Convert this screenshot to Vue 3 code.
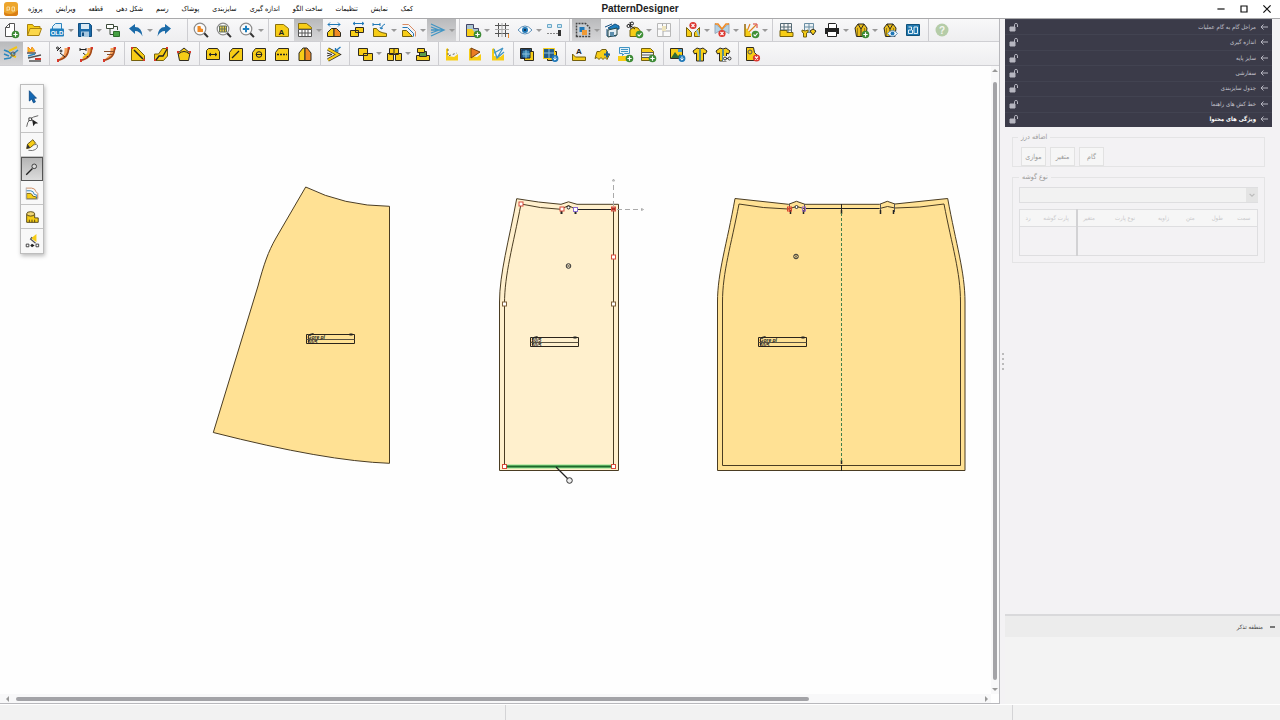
<script setup>
const INK = '#2e2a20'
const YEL = '#f7cd16'
const BLUE = '#1a6aa8'
const ORG = '#f08a24'

const plus = '<circle cx="13.5" cy="13.5" r="3.8" fill="#3c8a35"/><path d="M13.5 11.3v4.4M11.3 13.5h4.4" stroke="#fff" stroke-width="1.2"/>'
const tick = '<circle cx="13.5" cy="13.5" r="3.8" fill="#3f9038"/><path d="M11.6 13.5l1.5 1.5 2.4-2.8" stroke="#fff" stroke-width="1.1"/>'
const cross = (x, y) => `<circle cx="${x}" cy="${y}" r="3.6" fill="#dc3730"/><path d="M${x - 1.5} ${y - 1.5}l3 3m0-3l-3 3" stroke="#fff" stroke-width="1.1"/>`
const blob = '<circle cx="14" cy="13.5" r="3.4" fill="#1f78b8"/><path d="M14 11.5v3.6m-1.6-1.6l1.6 1.6 1.6-1.6" stroke="#fff"/>'
const lens = (inner) => `<circle cx="8" cy="8" r="5.8" fill="#fbfbfb" stroke="#8b8b8b" stroke-width="1.2"/>${inner}<path d="M12.3 12.3l3.6 3.8" stroke="#333" stroke-width="2"/>`
const tag = (inner) => `<path d="M2.5 15.5V7.5l3-4h10v12z" fill="${YEL}" stroke="${INK}"/>${inner}`
const sheet = (inner) => `<path d="M2.5 14.5v-9l2-2h9l2 3v8z" fill="${YEL}" stroke="${INK}"/>${inner}`
const shirt = (inner) => `<path d="M6 3L2 6l1.6 3L5.5 8v8h7V8l1.9 1L16 6l-4-3q-3 2-6 0z" fill="${YEL}" stroke="${INK}"/><path d="M9 4.5V16" stroke="#1f78b8" stroke-width="1.5"/>${inner}`
const coat = (inner) => `<path d="M4.5 15.5L3 7l3-4h6l3 4-1 8.5z" fill="#e8bc1c" stroke="${INK}"/><path d="M6 3l3 5 3-5M9 8v8" stroke="${INK}"/><path d="M5.5 7v8M12.5 7v8" stroke="#9a7c12"/>${inner}`
const arc = (inner) => `<path d="M14.5 3Q15 13 3.5 15.5L8.5 11Q11 8 10.5 3z" fill="#f6a25c"/><path d="M14.5 3Q15 13 3.5 15.5" stroke="#a44a18" stroke-width="1.5"/><path d="M13 2h3v3zM3 14h2v3H3z" fill="#d9372c"/>${inner}`
const eye = (y) => `<path d="M2 ${y}q7-8 14 0q-7 8-14 0z" fill="#fff" stroke="#5c8fb8"/><circle cx="9" cy="${y}" r="3" fill="#1f78b8"/><circle cx="9" cy="${y}" r="1" fill="#123"/>`

const icons = {
  new: `<path d="M3.5 15.5V6.5l4-4h5v13z" fill="#fff" stroke="#555"/><path d="M3.5 6.5h4v-4" stroke="#555"/>${plus}`,
  open: `<path d="M2.5 14.5v-11h5l1.500 2h6v2" fill="${YEL}" stroke="#a9820e"/><path d="M2.5 14.5l2.500-7h11.500l-2.500 7z" fill="#fbd74a" stroke="#a9820e"/>`,
  old: '<path d="M4.5 8V5.5l3-3h6V8" fill="#dff0fa" stroke="#2c83bd"/><rect x="2" y="7.5" width="14" height="8" rx="1" fill="#1d7fbf"/><text x="9" y="13.8" font-size="6" font-weight="700" font-family="Liberation Sans, sans-serif" text-anchor="middle" fill="#fff">OLD</text>',
  save: `<path d="M2.5 2.5h11l2 2v11h-13z" fill="${BLUE}" stroke="#124f80"/><path d="M5 3h8v5H5z" fill="#dbe9f3"/><path d="M5 10.5h8V16H5z" fill="#a8c8e0"/><path d="M6 11.5h2V15H6z" fill="#124f80"/>`,
  tree: '<path d="M2.5 3.5h7v4h-7z" fill="#fff" stroke="#3c4b3a"/><path d="M6 7.5v6h4M9.5 5.5h4V9" stroke="#3c4b3a"/><path d="M9.5 10.5h6v5h-6z" fill="#46a043" stroke="#2c6d2b"/>',
  undo: `<path d="M2 7.5L8 3v3q7 0 7.500 9.500Q13 10 8 10v3z" fill="${BLUE}"/>`,
  redo: `<path d="M16 7.5L10 3v3q-7 0-7.500 9.500Q5 10 10 10v3z" fill="${BLUE}"/>`,
  find: lens(`<path d="M5.5 11V5h3l.5 2.500 2 .5V11z" fill="${ORG}"/>`),
  findGrid: lens('<path d="M4.5 5h7v6h-7z" fill="#e8cb4a"/><path d="M4.5 5h7v6h-7zM4.5 8h7M7 5v6M9.5 5v6" stroke="#65705a"/>'),
  zoom: lens('<path d="M8 4.8v6.400M4.8 8h6.400" stroke="#1d7fbf" stroke-width="2"/>'),
  tagA: `<path d="M2.5 15.5v-12h8l5 4v8z" fill="${YEL}" stroke="#88700f"/><text x="8.5" y="13.5" font-size="8" font-weight="700" font-family="Liberation Sans, sans-serif" text-anchor="middle" fill="#222">A</text>`,
  tagTable: `<path d="M2.5 8V2.5h8l5 4V8z" fill="${YEL}" stroke="#88700f"/><path d="M2.5 8.5h13v7h-13z" fill="#fff"/><path d="M2.5 8.5h13v7h-13zM2.5 12h13M6 8.5v7M9 8.5v7M12 8.5v7" stroke="#555"/>`,
  flip: `<path d="M3 3.5h12M5 1.5l-2 2 2 2M13 1.5l2 2-2 2" stroke="#1f78b8"/><path d="M2.5 15.5v-4l4-4h2.500v8z" fill="${YEL}" stroke="${INK}"/><path d="M9 15.5v-8h2.500l4 4v4z" fill="${ORG}" stroke="${INK}"/>`,
  stackMove: `<path d="M5 2.5h11M7 1L5 2.5 7 4M14 1l2 1.500L14 4" stroke="#1f78b8"/><path d="M7.5 6.5h8v5h-8zM2.5 9.5h8v6h-8z" fill="${YEL}" stroke="${INK}"/>`,
  step: `<path d="M2.5 15.5V7.5h3q2 4 10 5v3z" fill="${YEL}" stroke="#74600e"/><path d="M2 3.5h7M2 2v3M9 2v3M14 3q-3 1-4 5M9 6l1 2 2-1" stroke="#1f78b8"/>`,
  contour: `<path d="M2.5 15.5v-6h4l6 6z" fill="${YEL}" stroke="#74600e"/><path d="M2.5 6.5h5l6 6v3" stroke="#1f78b8"/><path d="M2.5 3.5h6l7 7v5" stroke="#d98b62"/>`,
  fan: '<path d="M2 3l13 6-13 6M2 6l8 3-8 3M2 9h12" stroke="#4295c4" stroke-width="1.3"/>',
  pieceAdd: `<path d="M2.5 15.5v-12h7v4h5v8z" fill="#a9c4cf" stroke="#446"/><path d="M3 8h5l3 4h3v3H3z" fill="${YEL}"/>${plus}`,
  grid: '<path d="M5.5 2v14M12.5 2v14M2 4.5h14M2 12.5h14" stroke="#555"/><path d="M9 2v14M2 8.5h14" stroke="#aaa"/><path d="M15.5 13v4" stroke="#ee8b2e"/>',
  eye: eye(9),
  slider: '<path d="M2.5 3.5h4v3h-4zM12.5 3.5h4v3h-4z" fill="#cfe6f3" stroke="#6aa8c8"/><path d="M2 12.5h11" stroke="#888" stroke-dasharray="2 1"/><path d="M13 9h3v6h-3z" fill="#333"/>',
  select: '<path d="M2.5 15.5v-13h9l4 4v9z" fill="#c9cdd1" stroke="#444" stroke-width="1.5" stroke-dasharray="2 1"/><path d="M5.5 6h5v5h-5z" fill="#1f78b8"/><path d="M8 9h5v5H8z" fill="#f09a35"/>',
  house: '<path d="M5 7l7-4 4 2v3l-7 1z" fill="#1d7fbf" stroke="#124f80"/><path d="M2 6l7-3M4 8v7h9V8" stroke="#124f80"/><path d="M5 9l9-2v7l-9 2z" fill="#e4eef4" stroke="#244"/><path d="M7 11h4v4H7z" fill="#5d8fae"/>',
  cutOk: `<path d="M4 15.5V9l4-3 4 1 3 4v4.500z" fill="${YEL}" stroke="#74600e"/><path d="M2 3l7 5M4 1l1 7" stroke="#222"/><circle cx="2.5" cy="5" r="1.5" stroke="#222"/><circle cx="6" cy="2.5" r="1.5" stroke="#222"/>${tick}`,
  mapPale: '<path d="M2.5 2.5h13v13h-13z" fill="#fafafa" stroke="#b8b8b8"/><path d="M2.5 8h5V2.5M8 15v-5h7M11.5 3v5" stroke="#aaa"/><path d="M7 5h4v5H7z" fill="#eee4bd"/>',
  dartX: `<path d="M2.5 15.5v-9l5 5v4zM15.5 15.5v-9l-5 5v4z" fill="${YEL}" stroke="#74600e"/><path d="M13 9l2 6" stroke="#8fc4e0" stroke-width="2"/>${cross(9, 4.5)}`,
  tieX: `<path d="M2 2.5l7 6-7 4zM16 2.5l-7 6 7 4z" fill="#b4d2e4" stroke="#9ab"/><path d="M2 3h3l4 5 4-5h3" stroke="${ORG}" stroke-width="1.5"/>${cross(9, 12.5)}`,
  rays: `<path d="M3 15V3M3 15L8 3M3 15L14 4" stroke="#dd8323" stroke-width="1.2"/><path d="M3 15.5V6l6 7v2.500z" fill="${YEL}"/><path d="M3 3v12.500h6" stroke="#74600e"/><path d="M11 3h4v4" stroke="#d9372c"/>${tick}`,
  tableTape: `<path d="M3.5 2.5h11v10h-11zM3.5 6h11M3.5 9h11M7 2.5v10M11 2.5v10" fill="#f5f5f5" stroke="#556a75"/><path d="M3 9.5h7v2h6v4H3z" fill="${YEL}" stroke="#74600e"/>`,
  dressGrid: `<path d="M4.5 2.5h9v9h-9zM4.5 6h9M9 2.5v9" fill="#e8f0f4" stroke="#6b8fa4"/><path d="M2 9l3 1 3-1v2l-1.500 1v4h-3v-4L2 11z" fill="${YEL}" stroke="#74600e"/><path d="M10 10l3-2 3 2-3 4z" fill="${YEL}" stroke="${INK}"/>`,
  print: '<path d="M5.5 7V2.5h7l1 1V7" fill="#fff" stroke="#222"/><path d="M2 7h14v6H2z" fill="#222"/><path d="M4.5 10.5h9v5h-9z" fill="#fff" stroke="#222"/>',
  coatAdd: coat(plus),
  coatEye: coat('<path d="M6.5 12.5q5-6 10 0q-5 6-10 0z" fill="#fff" stroke="#5c8fb8"/><circle cx="11.5" cy="12.5" r="2" fill="#1f78b8"/>'),
  screen: '<path d="M2.5 3.5h13v11h-13z" fill="#1f78b0" stroke="#115179"/><path d="M4.5 6h3v3h-3v3.500h4V9M10 12.5V6h3.500v6.500z" stroke="#e2f0f7"/>',
  help: '<circle cx="9" cy="9" r="6.5" fill="#b5cca8"/><text x="9" y="12.5" font-size="10" font-weight="700" font-family="Liberation Sans, sans-serif" text-anchor="middle" fill="#f3f6f0">?</text>',

  seam: '<path d="M2 5l5 2 3 3 6-5M2 14l6-1 3-3M2 9l5 2" stroke="#2b87bd" stroke-width="1.6"/><path d="M7 6l8-4M9 10l5 2" stroke="#f4c414" stroke-width="2"/><circle cx="11" cy="9" r="2" stroke="#555"/>',
  seamFlat: `<path d="M3 7V2l3 3 1-3 3 4z" fill="${YEL}" stroke="${ORG}"/><path d="M2 8h9M3 13l13-3M4 16h12" stroke="#555" stroke-width="1.3"/><path d="M3 11l7-2" stroke="#2b87bd" stroke-width="1.5"/><path d="M10 14h6" stroke="#d9372c" stroke-width="2"/>`,
  arcPct: arc('<path d="M3 6l4-4" stroke="#222"/><circle cx="3.5" cy="3" r="1" stroke="#222"/><circle cx="7" cy="6" r="1" stroke="#222"/><path d="M6 8l5 4" stroke="#222"/>'),
  arcLen: arc('<path d="M3 4.5h6M3 3v3M9 3v3" stroke="#222"/><path d="M6 8l5 4" stroke="#222"/><path d="M6 13l6-5" stroke="#f4c414" stroke-width="2"/>'),
  arcFlat: arc('<path d="M4 6.5h10M7 9.5h6" stroke="#8a4d2a"/>'),
  cornerCut: `<path d="M2.5 2.5h5l8 8v5h-13z" fill="${YEL}" stroke="#74600e"/><path d="M5 5l9 9" stroke="#222" stroke-width="1.5"/><path d="M2 2h2v2H2zM14 14h2v2h-2z" fill="#d9372c"/>`,
  curveCut: `<path d="M2.5 15.5V9h4l4-5.500h5V11l-4 4.500z" fill="${YEL}" stroke="#74600e"/><path d="M4 15l3-4h4l4-7" stroke="#222" stroke-width="1.3"/><path d="M2 14h2v2H2zM14 2h2v2h-2z" fill="#d9372c"/>`,
  pentagon: `<path d="M4.5 15.5L3 8l6-5 6 5-1.500 7.500z" fill="${YEL}" stroke="${INK}"/><path d="M3.5 9Q9 4 14.5 9" stroke="#222"/><path d="M2 6h2v2H2zM14 6h2v2h-2z" fill="#d9372c"/>`,
  tagArrow: sheet('<path d="M5 9.5h8M7 8L5 9.5 7 11M11 8l2 1.500-2 1.500" stroke="#222"/>'),
  tagSlash: tag('<path d="M5 13l7-7" stroke="#222" stroke-width="1.3"/>'),
  tagRound: tag('<circle cx="9" cy="9.5" r="2.8" stroke="#222"/><path d="M6 9.5h6" stroke="#222"/>'),
  tagDots: tag('<path d="M4 9.5h10" stroke="#222" stroke-width="1.5" stroke-dasharray="2 1"/>'),
  halves: `<path d="M3 15.5V8l4-5h2v12.500z" fill="${YEL}" stroke="${INK}"/><path d="M9 15.5V3h2l4 5v7.500z" fill="${ORG}" stroke="${INK}"/>`,
  chevrons: `<path d="M3 4l10 5.500L3 15" stroke="${INK}" stroke-width="3.6"/><path d="M3 4l10 5.500L3 15" stroke="${YEL}" stroke-width="2"/><path d="M2 8l5 1.500L2 11" stroke="${INK}"/><path d="M15.5 2l-5 4m0-3v3h3" stroke="#1f78b8" stroke-width="1.3"/>`,
  pair: `<path d="M2.5 3.5h9v7h-9zM7.5 8.5h9v7h-9z" fill="${YEL}" stroke="${INK}"/>`,
  trio: `<path d="M4.5 3.5h9v6h-9zM2.5 8.5h6v7h-6zM10.5 8.5h6v7h-6z" fill="${YEL}" stroke="${INK}"/><path d="M9 4v5" stroke="${INK}"/>`,
  stack: `<path d="M2.5 10.5h13v5h-13z" fill="${YEL}" stroke="${INK}"/><path d="M5.5 6.5h7v5h-7z" fill="#5a9c4b" stroke="${INK}"/><path d="M3.5 3.5h7v4h-7z" fill="${YEL}" stroke="${INK}"/>`,
  cornerA: `<path d="M3 15.5V4l2-1v8l6 1 4-3v6.500z" fill="${YEL}"/><path d="M5 4v7l9-3" stroke="#665" stroke-dasharray="2 2"/>`,
  cornerB: `<path d="M3 15.5V4l2-1v8l6 1 4-3v6.500z" fill="${YEL}"/><path d="M5 3v10l9-6z" fill="#eb7b24" stroke="#74400e"/>`,
  cornerC: `<path d="M3 15.5V4l2-1v8l6 1 4-3v6.500z" fill="${YEL}"/><path d="M5 4l3 9 6-10M5 8l9-5M8 13l7-6" stroke="#4295c4" stroke-width="1.3"/>`,
  photo: `<path d="M2.5 3.5h11v10h-11z" fill="#245d88" stroke="${INK}"/><path d="M6.5 6.5h9v9h-9z" fill="${YEL}" stroke="${INK}"/><path d="M4 5h8v8H4z" fill="#3a86b4" stroke="#124"/><path d="M4 9h8M8 5v8" stroke="#8cc0dc"/>`,
  photoDot: `<path d="M6.5 6.5h9v9h-9z" fill="${YEL}" stroke="${INK}"/><path d="M2.5 3.5h11v10h-11z" fill="#245d88" stroke="${YEL}"/><path d="M3 8h10M8 4v9" stroke="#8cc0dc"/>${blob}`,
  textPiece: `<path d="M2.5 15.5V9l3 3h10v3.500z" fill="${YEL}" stroke="#74600e"/><text x="9" y="8.5" font-size="8" font-weight="700" font-family="Liberation Sans, sans-serif" text-anchor="middle" fill="#222">A</text>`,
  zigzag: `<path d="M2 13.5l2-7q3 1 5-2h4l3 6-2 4-2-2-2 2-2-2-2 2-2-2z" fill="${YEL}" stroke="#74600e"/><path d="M14 6.5v6M11 9.5h6" stroke="#1f5f90" stroke-width="2"/>`,
  noteAdd: `<path d="M3.5 2.5h10v6h-5l-2 2v-2h-3z" fill="#e4f1f8" stroke="#4295c4"/><path d="M5 4.5h7M5 6.5h7" stroke="#4295c4"/><path d="M2 11h9v5H2z" fill="${YEL}"/>${plus}`,
  sheetAdd: `<path d="M2.5 15.5v-12h9l3 3v9z" fill="${YEL}" stroke="#74600e"/><path d="M3 7.5h11v5H3z" fill="#f4f4f0"/><path d="M2.5 7.5h12M2.5 10h12M2.5 12.5h9" stroke="#555"/>${plus}`,
  landscape: `<path d="M2.5 3.5h12v10h-12z" fill="${YEL}" stroke="${INK}"/><path d="M3 13l4-6 3 4 2-2 2 4z" fill="#2d6b3a"/><path d="M10 4h4v3h-4z" fill="#4f9cc4"/>${blob}`,
  shirt: shirt(''),
  shirtLink: shirt('<path d="M9 11h8v5H9z" fill="#f2f2f3"/><circle cx="11" cy="13.5" r="1.5" stroke="#333"/><circle cx="15.5" cy="13.5" r="1.5" stroke="#333"/><path d="M12 13.5h2" stroke="#333"/>'),
  pieceX: `<path d="M3.5 15.5v-13h7l1 5 3 3v5z" fill="${YEL}" stroke="${INK}"/><circle cx="7" cy="7" r="2" stroke="#555"/>${cross(13.5, 13)}`,

  cursor: '<path d="M6 2v11.500l2.800-2.300 1.800 4.300 2.200-1-1.900-4.200H14z" fill="#1368b4" stroke="#0d4a86"/>',
  node: '<path d="M3 15.5Q4 5 16 3" stroke="#555"/><path d="M5.5 5.5h3v3h-3z" fill="#fff" stroke="#333"/><path d="M9 7l1.500 8 2-3 3.500-.5z" fill="#222"/>',
  pencil: `<path d="M4 8l6-5 3 4-6 5-4 1z" fill="${YEL}" stroke="#5c4b10"/><path d="M3 13l1-5 3 4z" fill="#333"/><path d="M5 15q5 1 8-1t2-5q-1-2-3 0" stroke="#666"/>`,
  pin: '<path d="M2.5 15.5l7-7" stroke="#222" stroke-width="1.5"/><circle cx="11.5" cy="6" r="2.6" fill="#d8d8d8" stroke="#333"/>',
  layers: `<path d="M3 15.5v-6h4q2 0 3 3l4 1v2z" fill="${YEL}" stroke="#74600e"/><path d="M2.5 6.5h5q3 0 4 4l3 1v4" stroke="#1f78b8"/><path d="M2.5 3.5h6q4 0 5 4l2 2v6" stroke="#c98355"/><path d="M2.5 3v13h13" stroke="#aaa"/>`,
  tape: `<path d="M3 6v9h13v-5h-4V6z" fill="${YEL}" stroke="#4c3e10"/><ellipse cx="7.5" cy="5.5" rx="4.5" ry="2.5" fill="#f0d675" stroke="#4c3e10"/><path d="M6 15v-3M9 15v-3M12 15v-3" stroke="#4c3e10"/>`,
  symmetry: `<path d="M8 6l6-5v9z" fill="${YEL}"/><path d="M7 6.5l6 5M9 4.5l-2 3" stroke="#555" stroke-width="1.3"/><path d="M2.5 12.5h3v3h-3zM13.5 12.5h3v3h-3z" fill="#fff" stroke="#333"/><path d="M7 14l2-2 3 2-3 2z" fill="#222"/>`
}

const b = (icon, label, menu = false, on = false) => ({ icon, label, menu, on })

const rowOne = [
  { cls: 'tight', items: [b('new', 'New'), b('open', 'Open'), b('old', 'Open old', true), b('save', 'Save', true), b('tree', 'Structure'), b('undo', 'Undo', true), b('redo', 'Redo')] },
  { cls: 'far', items: [b('find', 'Zoom piece'), b('findGrid', 'Zoom all'), b('zoom', 'Zoom in', true)] },
  { items: [b('tagA', 'Names'), b('tagTable', 'Table', true, true), b('flip', 'Flip'), b('stackMove', 'Distribute'), b('step', 'Step', true), b('contour', 'Contours', true), b('fan', 'Grading', true, true)] },
  { items: [b('pieceAdd', 'Add piece', true), b('grid', 'Grid'), b('eye', 'View', true), b('slider', 'Options')] },
  { items: [b('select', 'Selection', true, true), b('house', 'Workshop'), b('cutOk', 'Cut', true), b('mapPale', 'Plan')] },
  { items: [b('dartX', 'Remove dart', true), b('tieX', 'Remove join', true), b('rays', 'Apply grading', true)] },
  { items: [b('tableTape', 'Measurements'), b('dressGrid', 'Garment table'), b('print', 'Print', true), b('coatAdd', 'Add garment', true), b('coatEye', 'Show garment'), b('screen', '3D')] },
  { items: [b('help', 'Help')] }
]

const rowTwo = [
  { items: [b('seam', 'Seam', false, true), b('seamFlat', 'Flat seam')] },
  { items: [b('arcPct', 'Ratio'), b('arcLen', 'Length'), b('arcFlat', 'Parallel')] },
  { items: [b('cornerCut', 'Cut corner'), b('curveCut', 'Cut curve'), b('pentagon', 'Shape')] },
  { items: [b('tagArrow', 'Width'), b('tagSlash', 'Line'), b('tagRound', 'Button'), b('tagDots', 'Stitch'), b('halves', 'Mirror')] },
  { items: [b('chevrons', 'Merge')] },
  { cls: 'wide', items: [b('pair', 'Copy', true), b('trio', 'Arrange', true), b('stack', 'Stack')] },
  { items: [b('cornerA', 'Corner'), b('cornerB', 'Fill corner'), b('cornerC', 'Grade corner')] },
  { items: [b('photo', 'Image'), b('photoDot', 'Import image')] },
  { items: [b('textPiece', 'Text'), b('zigzag', 'Zigzag'), b('noteAdd', 'Add note'), b('sheetAdd', 'Add sheet')] },
  { items: [b('landscape', 'Picture'), b('shirt', 'Shirt'), b('shirtLink', 'Link shirt')] },
  { items: [b('pieceX', 'Delete piece')] }
]

const menus = ['پروژه', 'ویرایش', 'قطعه', 'شکل دهی', 'رسم', 'پوشاک', 'سایزبندی', 'اندازه گیری', 'ساخت الگو', 'تنظیمات', 'نمایش', 'کمک']
const sections = ['مراحل گام به گام عملیات', 'اندازه گیری', 'سایز پایه', 'سفارشی', 'جدول سایزبندی', 'خط کش های راهنما', 'ویژگی های محتوا']
const tools = [b('cursor', 'Select'), b('node', 'Edit node'), b('pencil', 'Draw'), b('pin', 'Pin', false, true), b('layers', 'Layers'), b('tape', 'Measure'), b('symmetry', 'Symmetry')]
const columns = ['رد', 'پارت گوشه', 'متغیر', 'نوع پارت', 'زاویه', 'متن', 'طول', 'سمت']
const seams = ['موازی', 'متغیر', 'گام']

const redHandles = [[521, 204], [562, 209], [613.5, 209], [613.5, 257], [504.5, 466.5], [613.5, 466.5]]
const plainHandles = [[504.5, 304], [613.5, 304]]
const labels = [
  { x: 306.5, y: 334.5, a: 'Gore pl', b: '50/5' },
  { x: 530.5, y: 337.5, a: '50/5', b: '50/5' },
  { x: 758.5, y: 337.5, a: 'Gore pl', b: '50/5' }
]
</script>

<template>
  <div class="app">
    <header class="title">
      <svg class="logo" viewBox="0 0 16 16" aria-hidden="true">
        <rect x="1" y="1" width="14" height="14" rx="3" fill="#eda52c" />
        <path d="M1 11q7 5 14-2v3q0 3-3 3H4q-3 0-3-3z" fill="#d97f16" />
        <path d="M4 10V6h2.500v3H4M9 10V6h2.500v4z" fill="none" stroke="#f9dca0" />
      </svg>
      <nav class="menus">
        <button v-for="m in menus" :key="m" dir="rtl">{{ m }}</button>
      </nav>
      <h1>PatternDesigner</h1>
      <div class="window">
        <button aria-label="Minimize"><svg viewBox="0 0 10 10"><path d="M2 5h6" /></svg></button>
        <button aria-label="Maximize"><svg viewBox="0 0 10 10"><path d="M2.5 2.5h5v5h-5z" /></svg></button>
        <button aria-label="Close"><svg viewBox="0 0 10 10"><path d="M2 2l6 6M8 2l-6 6" /></svg></button>
      </div>
    </header>

    <div class="body">
      <main class="work">
        <div v-for="(row, r) in [rowOne, rowTwo]" :key="r" class="bar">
          <div v-for="(g, i) in row" :key="i" class="group" :class="g.cls">
            <button v-for="t in g.items" :key="t.icon" class="tool" :class="{ on: t.on, menu: t.menu }" :aria-label="t.label">
              <svg viewBox="0 0 18 18" fill="none" v-html="icons[t.icon]"></svg>
              <i v-if="t.menu"></i>
            </button>
          </div>
        </div>

        <div class="stage">
          <svg class="drawing" fill="none" stroke="#4a3c22">
            <g transform="translate(0 -66)">
              <path d="M305.7 187Q344 206 389.5 206.3V463.3Q325 461 213.3 432.5L258 286C264 264 268 252 276 238Z" fill="#ffe194" />

              <path d="M516.7 198.7Q538 202.5 561 204.3L568.5 201.8 577 204.3H618.5V470.5H499.5V302C499.5 274 509 240 516.7 198.7Z" fill="#fff0cd" />
              <path d="M521 204Q540 208.5 561 209.3L568.5 205.5 576 209.5H613.5V466.5H504.5V304C504.5 274 513 246 521 204Z" />
              <path d="M505 466.5H613" stroke="#8fe38d" stroke-width="4" />
              <path d="M505 466.5H613" stroke="#1c6a2c" stroke-width="2" />
              <path d="M576 209.5H613" stroke="#222" />
              <path d="M561.5 210v4M575.5 210v4" stroke="#222" stroke-width="2" />
              <g stroke="#aaa">
                <path d="M613.5 206V184M617 209.5H640" stroke-dasharray="5 3" />
                <path d="M612.5 181l1-2 1 2zM641.5 208.5l2 1-2 1z" />
              </g>
              <circle cx="568.5" cy="207.5" r="1.5" fill="#fff" stroke="#222" />
              <circle cx="568.5" cy="266" r="2.3" stroke="#333" />
              <path d="M567 264.5l3 3m0-3l-3 3" stroke="#333" stroke-width=".7" />
              <rect v-for="(h, i) in redHandles" :key="i" :x="h[0] - 2" :y="h[1] - 2" width="4" height="4" fill="#fff" stroke="#d84a3a" />
              <rect x="612.5" y="208" width="2" height="2" fill="#a32" stroke="#a32" />
              <rect x="573.5" y="207.5" width="4" height="4" fill="#fff" stroke="#8a6cd0" />
              <rect v-for="(h, i) in plainHandles" :key="'p' + i" :x="h[0] - 2" :y="h[1] - 2" width="4" height="4" fill="#fff" stroke="#80603a" />
              <path d="M556 467L568 479" stroke="#222" stroke-width="1.3" />
              <circle cx="569.5" cy="480.5" r="2.8" fill="#eee" stroke="#333" />

              <path d="M735 198.5L788.5 204.3 796.5 201.3 805 204.3H879.5L887.3 201.3 895 204 947.7 198.5C956 244 965 272 965 302V470.5H717.5V302C717.5 272 727 244 735 198.5Z" fill="#ffe194" />
              <path d="M739 204Q763 208.5 788 209L796.5 206.5 804 208.5H879.5L887.5 206.5 895 208Q920 208 944 204C952 246 960.5 272 960.5 302V465.5H722.5V302C722.5 272 731 246 739 204Z" />
              <path d="M789.5 204v8M804.5 204v8M880.5 204v8M894.5 204v8" stroke="#555" />
              <path d="M790.5 210v4M803.5 210v4M880.5 210v4M893.5 210v4M841.5 210v4M841.5 460v4" stroke="#222" stroke-width="1.5" />
              <path d="M806 208.5H879M841.5 204v8M841.5 465v6" stroke="#222" />
              <path d="M841.5 213V461" stroke="#3f7f4a" stroke-dasharray="3 2" />
              <circle cx="796.5" cy="207" r="1.5" fill="#fff" stroke="#333" />
              <circle cx="796" cy="256.5" r="2.3" stroke="#333" />
              <path d="M794.5 255l3 3m0-3l-3 3" stroke="#333" stroke-width=".7" />
              <rect x="787.5" y="207" width="4" height="4" stroke="#d9452f" />
              <path d="M787 209h5m-2.500-3v6" stroke="#d9452f" />
              <rect x="802.5" y="207" width="3" height="4" stroke="#a06cc4" />

              <g v-for="l in labels" :key="l.x">
                <path :d="`M${l.x} ${l.y}h48v9h-48z`" stroke="#2b241a" />
                <path :d="`M${l.x} ${l.y + 5}h48M${l.x + 2} ${l.y}v9`" stroke="#5b523f" />
                <rect :x="l.x + 43" :y="l.y - 1" width="3" height="2" fill="#222" stroke="none" />
                <path :d="`M${l.x + 3} ${l.y}l4-1`" stroke="#222" />
                <text :x="l.x + 1" :y="l.y + 4.5" class="tiny">{{ l.a }}</text>
                <text :x="l.x + 1" :y="l.y + 9" class="tiny">{{ l.b }}</text>
              </g>
            </g>
          </svg>

          <div class="palette">
            <button v-for="t in tools" :key="t.icon" :class="{ on: t.on }" :aria-label="t.label">
              <svg viewBox="0 0 18 18" fill="none" v-html="icons[t.icon]"></svg>
            </button>
          </div>

          <div class="scroll vertical"><i class="up"></i><span></span><i class="down"></i></div>
          <div class="scroll horizontal"><i class="left"></i><span></span><i class="right"></i></div>
        </div>
      </main>

      <div class="splitter"><i></i><i></i><i></i><i></i></div>

      <aside class="side">
        <div class="sections">
          <button v-for="(s, i) in sections" :key="s" :class="{ current: i === sections.length - 1 }">
            <svg class="lock" viewBox="0 0 10 10"><path d="M1 5h5v4H1z" fill="currentColor" /><path d="M5.5 5V2.5q0-1 1.500-1t1.500 1V5" /></svg>
            <span dir="rtl">{{ s }}</span>
            <svg class="arrow" viewBox="0 0 10 10"><path d="M2 5h7M4.5 2.5L2 5l2.500 2.500" /></svg>
          </button>
        </div>

        <div class="props">
          <fieldset class="allowance">
            <legend dir="rtl">اضافه درز</legend>
            <button v-for="s in seams" :key="s" dir="rtl">{{ s }}</button>
          </fieldset>
          <fieldset class="corner">
            <legend dir="rtl">نوع گوشه</legend>
            <div class="pick">
              <select aria-label="نوع گوشه"><option></option></select>
              <svg viewBox="0 0 10 10"><path d="M3 4l2 2 2-2" /></svg>
            </div>
            <table>
              <thead><tr><th v-for="(c, i) in columns" :key="i" dir="rtl">{{ c }}</th></tr></thead>
              <tbody><tr><td v-for="(c, i) in columns" :key="i"></td></tr></tbody>
            </table>
          </fieldset>
        </div>

        <section class="note">
          <button><span dir="rtl">منطقه تذکر</span><i></i></button>
        </section>
      </aside>
    </div>

    <footer class="status"><span></span><span></span><span></span></footer>
  </div>
</template>

<style>
html, body { margin: 0; overflow: hidden; }
</style>

<style scoped>
.app {
  display: flex;
  flex-direction: column;
  height: 100vh;
  background: #f3f2f4;
  font: 7px/12px "DejaVu Sans Condensed", "DejaVu Sans", sans-serif;
  color: #000;
}
button {
  margin: 0;
  padding: 0;
  border: 0;
  background: none;
  font: inherit;
  color: inherit;
}
svg { display: block; }

.title {
  display: grid;
  grid-template-columns: 1fr auto 1fr;
  align-items: center;
  height: 19px;
  box-sizing: border-box;
  border-bottom: 1px solid #a9a9ab;
  background: #fff;
  position: relative;
}
.logo { position: absolute; left: 3px; top: 1px; width: 16px; height: 16px; }
.menus { display: flex; gap: 13px; padding-left: 28px; white-space: nowrap; }
h1 { margin: 0; font: 700 10px/18px "Liberation Sans", Arial, sans-serif; color: #222; }
.window { display: flex; justify-content: flex-end; gap: 11px; padding-right: 7px; }
.window svg { width: 12px; height: 12px; fill: none; stroke: #111; stroke-width: 1; }

.body { display: flex; flex: 1; min-height: 0; }
.work { display: flex; flex-direction: column; flex: 1; min-width: 0; border-right: 1px solid #b8b8bc; }

.bar {
  display: flex;
  height: 23px;
  box-sizing: border-box;
  border-bottom: 1px solid #cfcfd3;
  background: linear-gradient(#f8f8f9, #eeeef0);
}
.bar + .bar { height: 24px; }
.group { display: flex; }
.group + .group { padding-left: 2px; margin-left: 3px; border-left: 1px solid #cdcdd1; }
.group.far { margin-left: 11px; }
.group.wide { padding-left: 4px; }
.tool { display: flex; align-items: center; width: 23px; }
.tool svg { width: 18px; height: 18px; margin-left: 2px; flex: none; }
.tool.menu { width: 29px; }
.tight .tool.menu { width: 28px; }
.tool i { border: 3px solid transparent; border-top-color: #999; border-bottom: 0; flex: none; margin-left: 2px; }
.tool.on { background: linear-gradient(#b9babc, #d6d6d8); }

.stage { position: relative; flex: 1; min-height: 0; overflow: hidden; background: #fefefe; border-bottom: 1px solid #b8b8bc; }
.drawing { width: 100%; height: 100%; }
.tiny { font: italic 700 5px "Liberation Sans", Arial, sans-serif; fill: #222; stroke: none; }

.palette {
  position: absolute;
  left: 20px;
  top: 18px;
  display: flex;
  flex-direction: column;
  border: 1px solid #bdbdbd;
  box-shadow: 1px 2px 4px #bbb;
  background: #f8f8f8;
}
.palette button { width: 22px; height: 24px; box-sizing: border-box; border-bottom: 1px solid #c4c4c4; }
.palette button:last-child { border-bottom: 0; }
.palette .on { border: 1px solid #555; background: linear-gradient(#b4b4b4, #dcdcdc); }
.palette svg { width: 16px; height: 16px; margin: auto; }

.scroll { position: absolute; display: flex; align-items: center; background: #f8f8f9; }
.scroll span { background: #a3a3a7; border-radius: 2px; }
.scroll i { border: 3px solid transparent; flex: none; }
.vertical { right: 0; top: 0; bottom: 9px; width: 8px; flex-direction: column; }
.vertical span { width: 4px; flex: 1; margin: 10px 0 8px; }
.horizontal { left: 0; right: 8px; bottom: 0; height: 9px; }
.horizontal span { height: 4px; width: 80%; margin: 0 auto 0 7px; }
.up { border-bottom-color: #999 !important; }
.down { border-top-color: #999 !important; }
.left { border-right-color: #999 !important; margin-left: 3px; }
.right { border-left-color: #999 !important; }

.splitter { display: flex; flex-direction: column; justify-content: center; align-items: center; gap: 3px; width: 5px; }
.splitter i { width: 2px; height: 2px; background: #bbb; }

.side { display: flex; flex-direction: column; width: 275px; font-size: 6px; }
.sections { display: grid; grid-auto-rows: 1fr; height: 108px; margin-right: 8px; background: #3b3b49; color: #c6c6d0; }
.sections button { display: flex; align-items: center; padding: 0 3px 1px 4px; border-top: 1px solid #424351; line-height: 10px; }
.sections span { flex: 1; text-align: start; }
.sections .current { color: #fff; font-weight: 700; }
.sections svg { width: 10px; height: 10px; fill: none; stroke: #b6b6c0; flex: none; }
.sections .arrow { margin-left: 3px; }
.sections .lock { color: #b6b6c0; }

.props { flex: 1; padding: 4px 15px 0 7px; color: #bdbdbf; }
fieldset { margin: 0; border: 1px solid #e4e4e5; min-width: 0; }
legend { padding: 0 3px; margin-left: 0; color: #999; font-size: 7px; line-height: 12px; }
.allowance { display: flex; padding: 4px 8px 0; height: 36px; box-sizing: border-box; }
.allowance legend { margin-left: -3px; }
.allowance button { width: 25px; height: 19px; margin-right: 4px; border: 1px solid #e2e2e2; box-sizing: border-box; background: #f6f6f6; color: #999; font-size: 7px; }
.corner { margin-top: 4px; padding: 4px 6px 6px; }
.pick { position: relative; }
.pick select { display: block; width: 100%; height: 16px; appearance: none; border: 1px solid #dedee0; border-radius: 0; background: #f2f2f2; font: inherit; padding: 0; }
.pick svg { position: absolute; right: 0; top: 1px; width: 12px; height: 14px; background: #e4e4e4; fill: none; stroke: #bbb; }
table { width: 100%; margin-top: 6px; border-collapse: collapse; table-layout: fixed; border: 1px solid #dedee0; }
th { height: 16px; padding: 0; font-weight: 400; font-size: 6px; line-height: 12px; color: #c8c8ca; background: #f6f6f6; border-bottom: 1px solid #dedee0; white-space: nowrap; overflow: hidden; }
th:nth-child(1) { width: 16px; }
th:nth-child(2) { width: 40px; }
th:nth-child(3) { width: 22px; }
th:nth-child(4) { width: 50px; }
th:nth-child(2), td:nth-child(2) { border-right: 2px solid #d2d2d4; }
td { height: 28px; padding: 0; }

.note { height: 90px; border-top: 2px solid #d9d9db; background: #f3f3f3; box-sizing: border-box; }
.note button { display: flex; justify-content: flex-end; align-items: center; gap: 7px; width: 100%; height: 21px; padding-right: 5px; background: #ececec; color: #444; font-size: 6px; }
.note i { width: 5px; height: 2px; background: #777; }

.status { display: grid; grid-template-columns: 505px 507px 1fr; height: 16px; border-top: 1px solid #fff; box-sizing: border-box; background: #f2f2f2; }
.status span + span { border-left: 1px solid #d4d4d6; }
</style>
